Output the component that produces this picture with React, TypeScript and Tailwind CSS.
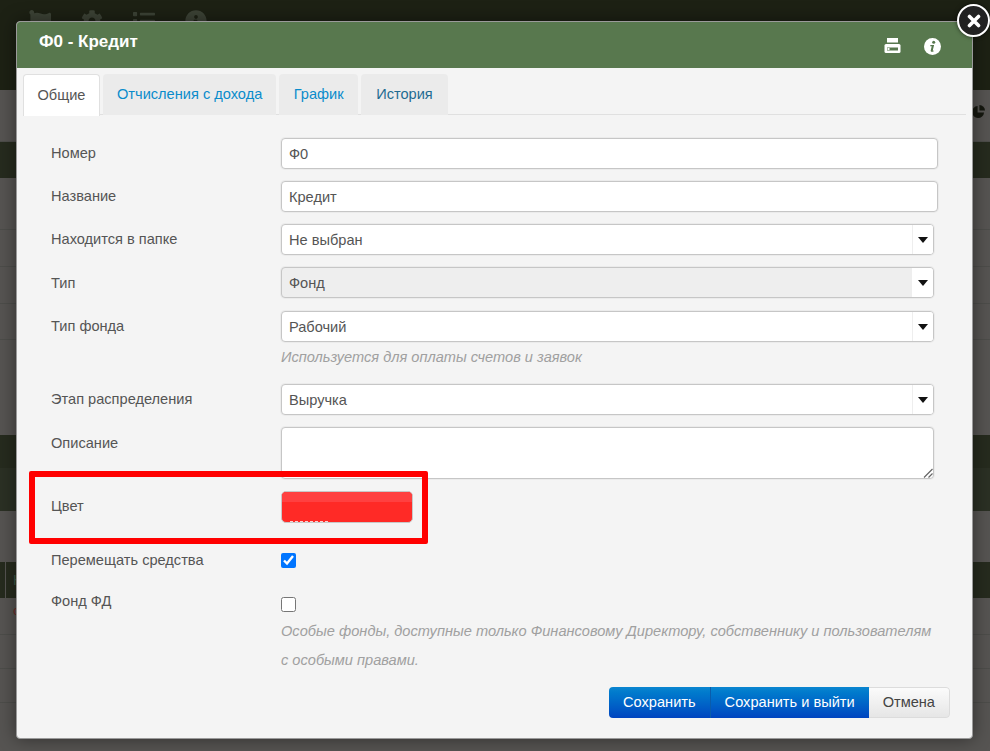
import React from "react";
import { FaFlag, FaCog, FaList, FaInfoCircle } from "react-icons/fa";

const rowLabel = "w-[230px] shrink-0 text-[14.6px] leading-[20px] text-[#555]";
const field = "h-[31px] rounded-[4px] border border-[#c6c6c6] bg-white px-[7px] text-[14.6px] leading-[30px] text-[#555] shadow-[0_0_0_1px_#ebebeb]";

function Caret() {
  return (
    <svg width="10" height="6" viewBox="0 0 10 6" className="block">
      <path d="M0 0h10L5 6z" fill="#111" />
    </svg>
  );
}

function Select({ value, disabled }: { value: string; disabled?: boolean }) {
  return (
    <div className={`flex w-[653px] overflow-hidden ${field} !px-0 ${disabled ? "!bg-[#eeeeee]" : ""}`}>
      <div className="flex-1 px-[7px]">{value}</div>
      <div className={`flex w-[21px] items-center justify-center bg-white ${disabled ? "" : "border-l border-[#eeeeee]"}`}>
        <Caret />
      </div>
    </div>
  );
}

function Row({ label, children, className = "", labelClass = "pt-[5px]" }: { label: string; children: React.ReactNode; className?: string; labelClass?: string }) {
  return (
    <div className={`flex ${className}`}>
      <div className={`${rowLabel} ${labelClass}`}>{label}</div>
      <div className="min-w-0 flex-1">{children}</div>
    </div>
  );
}

function Tab({ label, active, dark, className = "px-[14px]" }: { label: string; active?: boolean; dark?: boolean; className?: string }) {
  if (active)
    return (
      <div className="mb-[-1px] h-[42px] rounded-t-[4px] border border-b-0 border-[#e0e0e0] bg-white px-[13.500px] text-[14.6px] leading-[41px] text-[#555]">
        {label}
      </div>
    );
  return (
    <div className={`h-[41px] rounded-t-[4px] bg-[#ebebeb] text-[14.6px] leading-[41px] ${className} ${dark ? "text-[#1f6b92]" : "text-[#0a8ccb]"}`}>
      {label}
    </div>
  );
}

function BackdropRow({ className = "" }: { className?: string }) {
  return <div className={`border-b border-[#4d4d4a] ${className}`} />;
}

export default function App() {
  return (
    <div className="relative h-[751px] w-[990px] overflow-hidden bg-[#565452] font-['Liberation_Sans',Arial,sans-serif]">
      {/* dimmed page behind the dialog */}
      <div className="flex h-full flex-col">
        <div className="flex h-[90px] shrink-0 gap-[30px] bg-[#1d2114] px-[29px] pt-[10px] text-[#3d4336]">
          <FaFlag size={22} />
          <FaCog size={22} />
          <FaList size={22} />
          <FaInfoCircle size={22} />
        </div>
        <div className="flex h-[52px] shrink-0 justify-end border-b border-[#4d4d4a] bg-[#565452] pr-[5px] pt-[15px]">
          <svg width="13" height="13" viewBox="0 0 14 14" fill="#15170f"><path d="M6 1a6.500 6.500 0 1 0 7 7H6z" /><path d="M8 0a6 6 0 0 1 6 6H8z" /></svg>
        </div>
        <div className="h-[36px] shrink-0 bg-[#262b1e]" />
        <BackdropRow className="h-[52px] shrink-0" />
        <BackdropRow className="h-[37px] shrink-0" />
        <BackdropRow className="h-[37px] shrink-0" />
        <BackdropRow className="h-[36px] shrink-0" />
        <div className="h-[95px] shrink-0" />
        <div className="h-[33px] shrink-0 bg-[#262b1e]" />
        <div className="h-[43px] shrink-0 bg-[#2b3024]" />
        <div className="h-[51px] shrink-0" />
        <div className="flex h-[36px] shrink-0 bg-[#262b1e]">
          <div className="w-[6px] border-r border-[#565452]" />
          <div className="pl-[7px] text-[14px] leading-[36px] text-[#3c5a48]">Н</div>
        </div>
        <div className="h-[37px] shrink-0 border-b border-[#4d4d4a] pl-[13px] text-[13px] leading-[26px] text-[#6e2a25]">с</div>
        <BackdropRow className="h-[34px] shrink-0" />
        <BackdropRow className="h-[34px] shrink-0" />
      </div>

      {/* dialog */}
      <div className="absolute left-[16px] top-[21px] h-[718px] w-[957px] overflow-hidden rounded-[4px] border border-[#9a9a9a] bg-[#f4f4f4] shadow-[0_0_18px_rgba(0,0,0,0.45)]">
        <div className="flex h-[46px] items-center justify-between bg-[#58784e] pl-[22px] pr-[31px]">
          <div className="pb-[6px] text-[17px] font-bold text-white">Ф0 - Кредит</div>
          <div className="mt-[2px] flex items-center gap-[23px]">
            <svg width="17" height="17" viewBox="0 0 17 17" className="block">
              <path d="M3 0h11v4.500H3z" fill="#fff" />
              <rect x="0.500" y="6" width="16" height="9" rx="1.500" fill="#fff" />
              <rect x="3" y="9.500" width="11" height="3" fill="#58784e" />
              <rect x="3.500" y="10" width="2" height="2" fill="#fff" />
            </svg>
            <svg width="17" height="17" viewBox="0 0 17 17" className="block">
              <circle cx="8.500" cy="8.500" r="8.500" fill="#fff" />
              <circle cx="9.700" cy="4.300" r="1.500" fill="#58784e" />
              <path d="M6.400 7h3.700l-1.300 5.300c-.1.400.2.500.9.300l-.2.900c-1.500.5-3 .4-2.800-1l1-4.300H6.200z" fill="#58784e" />
            </svg>
          </div>
        </div>

        <div className="mx-[6px] mt-[6px] flex h-[41px] gap-[3px] border-b border-[#e0e0e0]">
          <Tab label="Общие" active />
          <Tab label="Отчисления с дохода" />
          <Tab label="График" className="px-[14.500px]" />
          <Tab label="История" dark className="px-[15px]" />
        </div>

        <div className="pl-[34px] pr-[34px] pt-[23px]">
          <Row label="Номер"><div className={`${field} w-[657px]`}>Ф0</div></Row>
          <Row label="Название" className="mt-[12px]"><div className={`${field} w-[657px]`}>Кредит</div></Row>
          <Row label="Находится в папке" className="mt-[12px]"><Select value="Не выбран" /></Row>
          <Row label="Тип" className="mt-[12px]" labelClass="pt-[6px]"><Select value="Фонд" disabled /></Row>
          <Row label="Тип фонда" className="mt-[13px]">
            <Select value="Рабочий" />
            <div className="mt-[5px] text-[14.6px] italic leading-[20px] text-[#a0a0a0]">Используется для оплаты счетов и заявок</div>
          </Row>
          <Row label="Этап распределения" className="mt-[17px]"><Select value="Выручка" /></Row>
          <Row label="Описание" className="mt-[12px]" labelClass="pt-[6px]">
            <div className={`${field} relative !h-[52px] w-[653px]`}>
              <svg width="10" height="10" viewBox="0 0 10 10" className="absolute bottom-0 right-0">
                <path d="M1 9.500 9.500 1M5.500 9.500 9.500 5.500" stroke="#666" strokeWidth="1.200" />
              </svg>
            </div>
          </Row>
          <Row label="Цвет" className="mt-[12px]">
            <div className="relative h-[32px] w-[132px] overflow-hidden rounded-[5px] border border-[#c8c8c8] bg-[#ff2a26]">
              <div className="h-[10px] bg-[#ff4040]" />
              <div className="absolute bottom-0 left-[8px] w-[38px] border-b border-dashed border-[#ffd0d0]" />
            </div>
          </Row>
          <Row label="Перемещать средства" className="mt-[24px] h-[37px]" labelClass="pt-[3px]">
            <div className="pt-[6px]">
              <input type="checkbox" checked readOnly className="block h-[15px] w-[15px] accent-[#0075ff]" />
            </div>
          </Row>
          <Row label="Фонд ФД" className="mt-[5px]" labelClass="pt-[2px]">
            <div className="pt-[8px]">
              <input type="checkbox" readOnly className="block h-[15px] w-[15px]" />
            </div>
            <div className="mt-[5px] w-[660px] text-[14.6px] italic leading-[29px] text-[#a0a0a0]">
              Особые фонды, доступные только Финансовому Директору, собственнику и пользователям с особыми правами.
            </div>
          </Row>
          <div className="mr-[-12px] mt-[12px] flex justify-end">
            <div className="flex h-[31px] overflow-hidden rounded-[4px] text-[14.6px] leading-[31px]">
              <div className="border-r border-[#0a5cab] bg-gradient-to-b from-[#0a85cf] to-[#0044c0] px-[14px] text-white">Сохранить</div>
              <div className="bg-gradient-to-b from-[#0a85cf] to-[#0044c0] px-[14px] text-white">Сохранить и выйти</div>
              <div className="rounded-r-[4px] border border-l-0 border-[#dcdcdc] bg-gradient-to-b from-[#fbfbfb] to-[#e6e6e6] px-[14px] leading-[29px] text-[#444]">Отмена</div>
            </div>
          </div>
        </div>
      </div>

      {/* red annotation frame */}
      <div className="absolute left-[29px] top-[471px] h-[73px] w-[399px] rounded-[2px] border-[6px] border-[#ff0000]" />

      {/* close button */}
      <div className="absolute left-[957px] top-[4px] flex h-[33px] w-[33px] items-center justify-center rounded-full border-2 border-white bg-[#222] shadow-[0_0_4px_rgba(0,0,0,0.6)]">
        <svg width="14" height="14" viewBox="0 0 14 14">
          <path d="M2.500 2.500l9 9M11.500 2.500l-9 9" stroke="#fff" strokeWidth="3.600" strokeLinecap="round" />
        </svg>
      </div>
    </div>
  );
}
